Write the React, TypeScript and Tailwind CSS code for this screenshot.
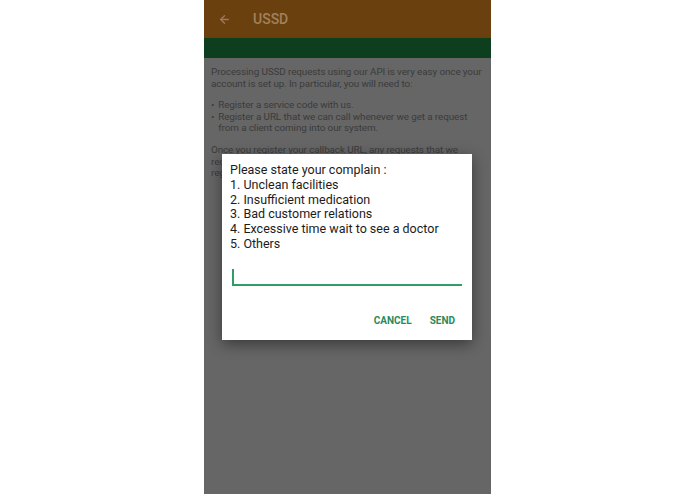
import { ArrowLeft } from "lucide-react";

const options = [
  "1. Unclean facilities",
  "2. Insufficient medication",
  "3. Bad customer relations",
  "4. Excessive time wait to see a doctor",
  "5. Others",
];

const App = () => {
  return (
    <div className="flex justify-center w-full h-[494px] bg-white font-['Roboto',sans-serif]">
      <div className="relative w-[287px] h-full flex flex-col bg-[#666666] overflow-hidden">
        <div className="flex items-center h-[38px] bg-[#6a400e] shrink-0">
          <ArrowLeft size={13} strokeWidth={2.5} className="ml-[14px] text-[#9a7a58]" />
          <span className="ml-[22px] text-[14px] font-medium text-[#a0825f]">USSD</span>
        </div>
        <div className="h-[20px] bg-[#0d3f1e] shrink-0" />
        <div className="pl-[7px] pt-[8px] text-[9.9px] leading-[11.6px] text-[#3b3b3b] whitespace-nowrap tracking-[-0.1px]">
          <p>Processing USSD requests using our API is very easy once your</p>
          <p>account is set up. In particular, you will need to:</p>
          <ul className="mt-[10px]">
            <li className="flex gap-[4px]">
              <span>•</span>
              <span>Register a service code with us.</span>
            </li>
            <li className="flex gap-[4px]">
              <span>•</span>
              <span>
                Register a URL that we can call whenever we get a request
                <br />
                from a client coming into our system.
              </span>
            </li>
          </ul>
          <p className="mt-[10px]">Once you register your callback URL, any requests that we</p>
          <p>receive on your service code will be forwarded to your</p>
          <p>registered callback URL.</p>
        </div>

        <div className="absolute left-[18px] top-[154px] w-[250px] h-[186px] bg-white shadow-[0_4px_14px_rgba(0,0,0,0.45)] flex flex-col">
          <div className="pl-[8px] pt-[9px] text-[12.5px] leading-[14.8px] text-[#1c1c1c]">
            <p>Please state your complain :</p>
            {options.map((o) => (
              <p key={o}>{o}</p>
            ))}
          </div>
          <div className="mx-[10px] mt-[16px] h-[18px] border-b-2 border-[#2e9e64] relative">
            <div className="absolute left-0 top-[1px] w-[2px] h-[15px] bg-[#2e9e64]" />
          </div>
          <div className="flex justify-end gap-[18px] pr-[17px] mt-[27px] text-[10px] font-bold text-[#2a8a5c]">
            <span>CANCEL</span>
            <span>SEND</span>
          </div>
        </div>
      </div>
    </div>
  );
};

export default App;
